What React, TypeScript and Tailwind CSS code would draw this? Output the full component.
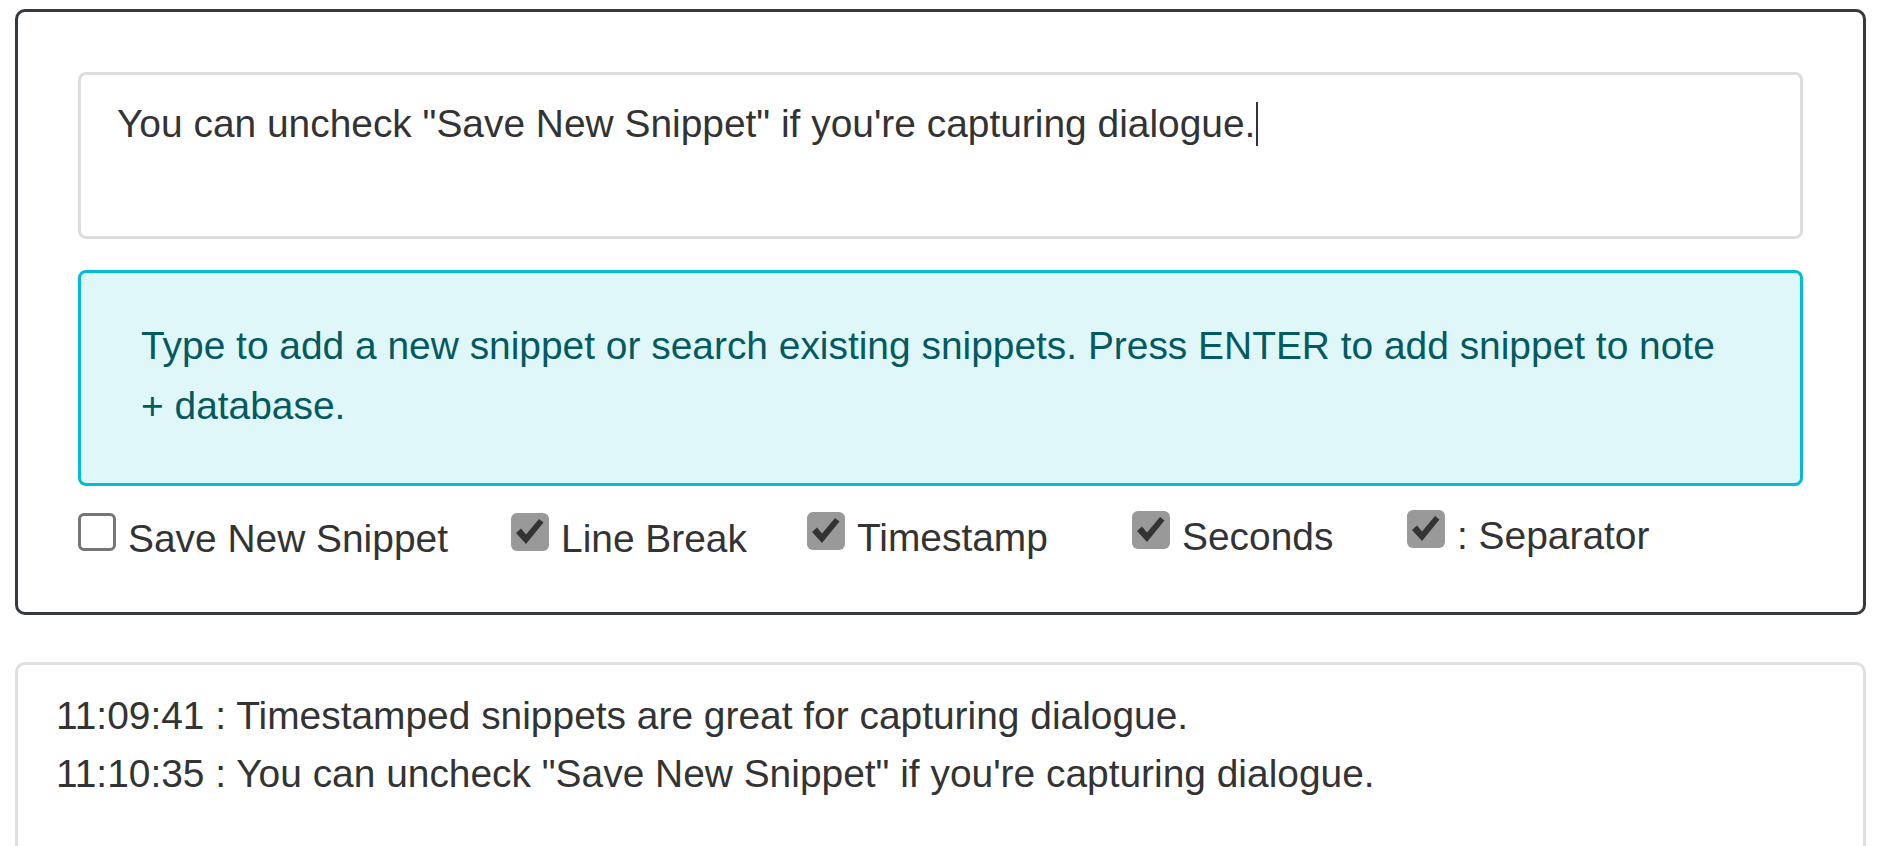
import React from "react";

const font = "font-['Liberation_Sans','Helvetica_Neue',Arial,sans-serif]";

function Check() {
  return (
    <svg width="38" height="38" viewBox="0 0 38 38" className="block">
      <polygon points="5,20 10,15.5 15,21.5 28,6 32.5,9.5 15,31" fill="#333333" />
    </svg>
  );
}

type Item = { label: string; checked: boolean; w: string; off: string };

const items: Item[] = [
  { label: "Save New Snippet", checked: false, w: "w-[433px]", off: "mt-[3px]" },
  { label: "Line Break", checked: true, w: "w-[296px]", off: "mt-[3px]" },
  { label: "Timestamp", checked: true, w: "w-[325px]", off: "mt-[2px]" },
  { label: "Seconds", checked: true, w: "w-[275px]", off: "mt-[1px]" },
  { label: ": Separator", checked: true, w: "w-[400px]", off: "mt-0" },
];

export default function App() {
  return (
    <div className={`bg-white w-[1894px] h-[846px] overflow-hidden text-[#333333] ${font}`}>
      <div className="pt-[9px] pl-[15px]">
        <div className="w-[1851px] h-[606px] border-[3px] border-[#343a40] rounded-[10px] p-[60px]">
          <div className="h-[167px] border-[3px] border-[#dddddd] rounded-[8px] pl-[36px] pt-[20px] text-[38.9px] leading-[58.5px] whitespace-nowrap">
            You can uncheck "Save New Snippet" if you're capturing dialogue.
            <span className="inline-block w-[2px] h-[44px] bg-[#333333] ml-[1px] align-[-9px]" />
          </div>
          <div className="mt-[31px] h-[216px] border-[3px] border-[#00bcd4] bg-[#e0f7fa] rounded-[8px] pl-[60px] pr-[60px] pt-[43px] text-[38.9px] leading-[60px] text-[#035a60]">
            Type to add a new snippet or search existing snippets. Press ENTER to add snippet to note + database.
          </div>
          <div className="mt-[24px] flex items-start">
            {items.map((it) => (
              <div key={it.label} className={`flex items-start shrink-0 ${it.w} ${it.off}`}>
                {it.checked ? (
                  <div className="w-[38px] h-[38px] rounded-[6px] bg-[#999999] shrink-0">
                    <Check />
                  </div>
                ) : (
                  <div className="w-[38px] h-[38px] rounded-[6px] border-[3px] border-[#767676] bg-white shrink-0" />
                )}
                <span className="ml-[12px] pt-[7px] text-[38.9px] leading-[38px] whitespace-nowrap">{it.label}</span>
              </div>
            ))}
          </div>
        </div>
        <div className="mt-[47px] w-[1851px] h-[260px] border-[3px] border-[#e0e0e0] rounded-[10px] pl-[38px] pt-[22px] text-[38.9px] leading-[58px]">
          <div>11:09:41 : Timestamped snippets are great for capturing dialogue.</div>
          <div>11:10:35 : You can uncheck "Save New Snippet" if you're capturing dialogue.</div>
        </div>
      </div>
    </div>
  );
}
